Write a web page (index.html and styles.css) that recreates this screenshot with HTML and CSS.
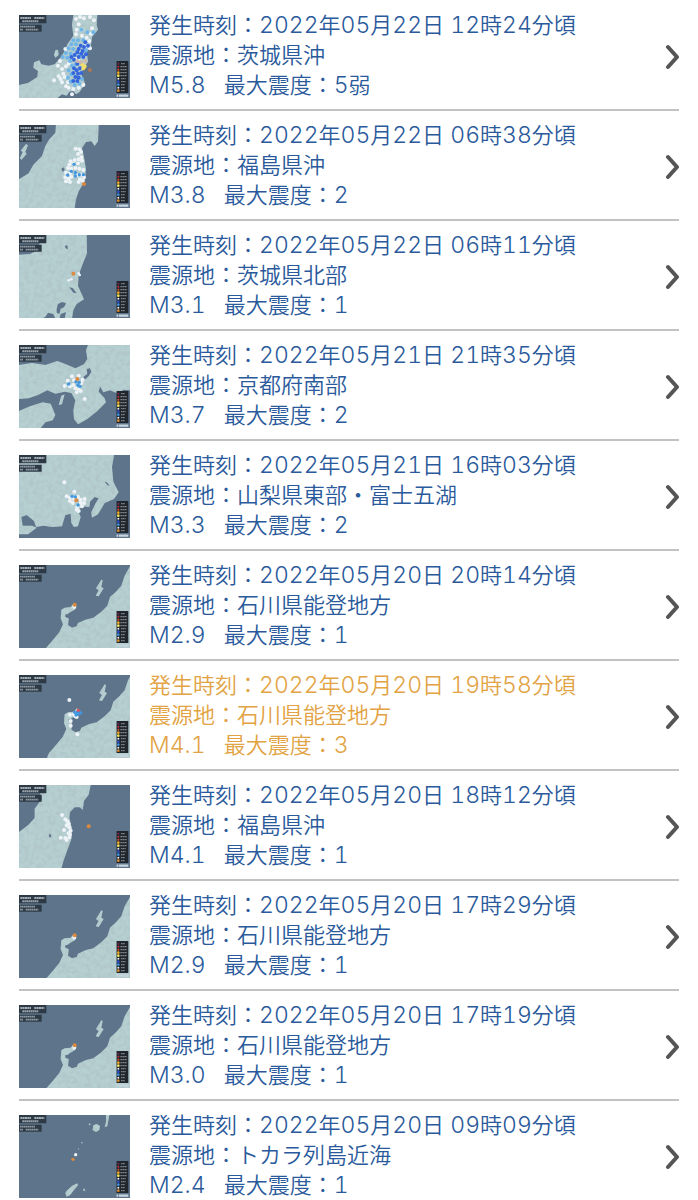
FILE: index.html
```
<!DOCTYPE html>
<html lang="ja">
<head>
  <meta charset="UTF-8" />
  <meta name="viewport" content="width=device-width, initial-scale=1.0" />
  <title>地震情報</title>
  <link rel="stylesheet" href="styles.css">
</head>
<body>
  <!-- shared map parts -->
  <svg class="defs" width="0" height="0" aria-hidden="true">
    <defs>
      <filter id="terrain" x="0" y="0" width="100%" height="100%">
        <feTurbulence type="fractalNoise" baseFrequency="0.07" numOctaves="3" seed="4" />
        <feColorMatrix values="0 0 0 0 0.42  0 0 0 0 0.53  0 0 0 0 0.55  0 1.8 0 0 -0.72" result="noise" />
        <feComposite in="noise" in2="SourceAlpha" operator="in" result="shade" />
        <feMerge>
          <feMergeNode in="SourceGraphic" />
          <feMergeNode in="shade" />
        </feMerge>
      </filter>
      <symbol id="caption" viewBox="0 0 84 52">
        <path d="M0 0H82V25H0ZM0 29H68V50H0Z" fill="#2d3a46" />
        <path d="M4 9H36M46 9H76" stroke="#a3adb5" stroke-width="6" stroke-dasharray="6 1" />
        <path d="M10 19H59" stroke="#98a3ac" stroke-width="6" stroke-dasharray="5 1" />
        <path d="M3 35H48M3 44H12M20 44H58" stroke="#8f9ba5" stroke-width="5" stroke-dasharray="5 1" />
      </symbol>
      <symbol id="legend" viewBox="0 0 40 110">
        <rect width="36" height="96" fill="#20262d" />
        <g stroke="#7d8286" stroke-width="4" stroke-dasharray="5 1">
          <path d="M14 8H26M12 17H32M12 26H32M12 35H32M12 44H32M14 53H28M14 62H28M14 71H26M14 80H26M14 89H26" />
        </g>
        <circle cx="6" cy="8" r="3" fill="#7d2457" />
        <circle cx="6" cy="17" r="3" fill="#c42e3b" />
        <circle cx="6" cy="26" r="3" fill="#e2502f" />
        <circle cx="6" cy="35" r="4" fill="#eaa52b" />
        <circle cx="6" cy="44" r="4" fill="#f3e45a" />
        <circle cx="6" cy="53" r="3" fill="#e6ecef" />
        <circle cx="6" cy="62" r="4" fill="#2c50c8" />
        <circle cx="6" cy="71" r="4" fill="#3e91dd" />
        <circle cx="6" cy="80" r="3" fill="#f2f5f7" />
        <circle cx="6" cy="89" r="4" fill="#d98a2c" />
        <path d="M0 104H36" stroke="#c7d5df" stroke-width="7" stroke-dasharray="6 2 28 1" />
      </symbol>
    </defs>
  </svg>

  <ul id="quakeList" class="quake-list"></ul>

  <script src="script.js"></script>
</body>
</html>
```
FILE: styles.css
```
body {
  margin: 0;
  background-color: #fff;
  color: #2a5a9b;
  font-family: "Noto Sans CJK JP", sans-serif;
  font-size: 22px;
  font-weight: 350;
  line-height: 30px;
}

.defs {
  position: absolute;
}

.quake-list {
  list-style: none;
  margin: 0;
  padding: 1px 19px 0;
}

.quake-list li {
  border-bottom: 2px solid #c2c2c2;
}

.quake-list li:last-child {
  border-bottom: none;
}

.quake {
  display: flex;
  align-items: center;
  gap: 19px;
  padding: 14px 0 11px;
  color: inherit;
  text-decoration: none;
}

li:last-child .quake {
  padding-bottom: 0;
}

.quake.alert {
  color: #e2a344;
}

.thumb {
  flex: none;
  width: 111px;
  height: 83px;
  background-color: #5e748a;
}

.land {
  fill: #b6cfd1;
}

.info {
  flex: 1;
  margin-top: -7px;
}

.info div {
  height: 30px;
  white-space: nowrap;
}

.num {
  font-family: Inter, sans-serif;
  font-size: 23px;
  font-weight: 300;
  font-variant-numeric: tabular-nums;
}

.intensity {
  margin-left: 18px;
}

.arrow {
  flex: none;
  width: 14px;
  height: 26px;
  fill: none;
  stroke: #555;
  stroke-width: 4;
  stroke-linecap: round;
  stroke-linejoin: round;
}
```
FILE: script.js
```
const SADO = "M274 68L278 70 274 90 281 94 266 118 257 116 266 100 258 94Z";

const NOTO = "M360 28V273H108L128 250 148 226 159 202 152 184 154 158 164 152 182 150 190 140 199 146 194 158 180 166 172 172 176 186 174 204 186 212 200 208 204 198 226 188 250 182 274 164 292 146 300 120 318 104 334 86 344 56Z" + SADO;

// coastlines, drawn three times larger than the thumbnail
const maps = {
  tohokuWide: "M190 30H262L260 60 264 74 246 96 242 126 230 140 234 170 220 188 214 208 226 238 216 250 208 262 198 268 190 258 178 260 170 272 156 268 142 279H27V240L54 234 82 216 84 198 70 188 72 172 88 166 94 178 116 182 134 178 150 160 166 136 172 118 190 92 186 60ZM136 136L144 134 146 150 136 158 132 150Z",
  fukushima: "M138 24H266L264 76 254 90 244 76 228 78 216 96 222 124 228 160 224 196 206 226 198 250 194 276H27V190L56 172 70 146 96 120 106 90 118 70 136 50ZM48 84L54 88 46 108 50 114 34 132 30 126 38 108 32 104Z",
  ibaraki: "M96 24H230L231 80 218 112 206 144 204 178 222 218 200 232 190 250 186 276H164L168 256 152 262 148 276H136L130 262 114 258 106 270 96 276H27V84L60 82 84 70Z",
  kansai: "M27 84L66 78 106 84 142 72 168 82 196 94 222 82 232 66 228 40 234 24H360V160L340 158 326 170 300 160 280 166 270 148 266 164 284 184 288 196 262 222 232 246 204 262 192 246 190 220 196 190 184 168 164 164 136 170 112 160 84 174 56 184 27 186ZM27 222L60 208 98 196 122 200 136 234 128 250 106 256 92 273H27ZM154 176L164 172 156 202 146 204Z",
  kanto: "M27 24H312L306 60 310 104 326 136 312 156 284 168 264 202 246 212 244 196 256 170 266 154 254 150 240 164 238 180 216 178 204 192 212 210 204 238 192 240 184 228 182 200 166 204 156 238 128 240 100 236 78 240 72 222 50 204 34 210 38 236 66 236 80 242 54 262 27 262Z",
  noto: NOTO,
  sanriku: "M80 21H242L236 50 222 68 218 96 210 88 194 88 180 102 178 120 186 152 184 184 172 216 160 250 154 272H27V162L54 142 74 120 74 92 96 62Z",
  tokara: "M288 349H298L292 382 284 386 288 370ZM250 380L260 376 270 382 268 394 258 400 248 394ZM170 576L186 562 202 554 204 560 192 574 180 590 170 594 166 584ZM238 374L242 376 240 380 236 378ZM214 430L218 430 216 436ZM220 570L224 570 226 576 220 576ZM204 448L207 450 204 453Z"
};

// small lakes and bays in sea colour
const water = {
  fukushima: "M154 158L162 154 164 162 158 168Z",
  ibaraki: "M164 58L172 56 174 66 168 66ZM178 182L188 184 200 200 190 198ZM140 246L144 232 156 226 168 230 162 242 152 246 148 262 140 258Z",
  kansai: "M230 96L240 94 244 104 236 118 224 128 220 120 232 110Z",
  kanto: "M284 104L290 106 300 116 292 114Z",
  noto: "M166 172L178 172 176 184 166 180Z",
  sanriku: "M116 170L122 168 124 178 118 178Z"
};

const W = "#eef3f8", B = "#4197df", D = "#3566dc", Y = "#f2de69", O = "#dd8a3e";

const notoDots = [[W, 6, "193 150"], [O, 6, "194 143"]];

const quakes = [
  { time: "2022年05月22日 12時24分頃", place: "茨城県沖", mag: "5.8", max: "5弱", map: "tohokuWide", top: 30, dots: [
    [W, 6, "198 42 210 36 222 40 240 36 252 46 206 58 200 74 198 88 216 92 230 98 242 86 246 70 238 108 240 130 226 124 214 74 166 132 150 168 144 182 156 192 160 206 168 184 176 176 146 214 132 226 152 222 164 216 156 232 174 232 176 248 190 252 206 248 220 240 168 244 186 268 198 162 206 168"],
    ["#6eb6e9", 6, "232 82 250 82 190 106 204 106 220 106 184 118 198 118 176 130 190 132 168 144 182 146 158 156 172 158 180 168 186 182 176 196 184 208 174 218 182 230 194 240 208 236 216 222 214 74 228 136 210 150 198 178"],
    [D, 6, "226 112 234 122 212 122 222 126 206 132 218 138 202 142 214 146 194 150 206 156 184 156 220 156 192 164 228 148 202 176 210 190 200 196 192 190 190 204 204 206 214 204 196 216 206 218 202 228 190 228"],
    [Y, 6, "216 178 224 184 220 190"], ["#ccb9a9", 6, "202 168 212 172 226 168"], ["#ad7655", 6, "240 195"]
  ] },
  { time: "2022年05月22日 06時38分頃", place: "福島県沖", mag: "3.8", max: "2", map: "fukushima", top: 27, dots: [
    [W, 6, "197 98 208 100 213 108 204 114 214 124 182 136 194 132 206 130 216 134 178 146 190 144 204 142 174 156 184 158 196 156 208 158 220 162 168 170 180 172 166 184 176 188 184 182 168 196 180 198 200 178 214 176 222 184 210 190 218 194 206 198"],
    [B, 5, "192 145 184 166 173 177 196 170 196 180 208 176 220 176"], [O, 6, "222 204"]
  ] },
  { time: "2022年05月22日 06時11分頃", place: "茨城県北部", mag: "3.1", max: "1", map: "ibaraki", top: 25, dots: [
    [W, 4, "176 161 184 158 209 145 206 140"], [O, 6, "190 141"]
  ] },
  { time: "2022年05月21日 21時35分頃", place: "京都府南部", mag: "3.7", max: "2", map: "kansai", top: 24, dots: [
    [W, 6, "173 131 186 118 192 130 206 116 218 128 164 147 180 148 190 144 196 154 206 158 200 166 212 162 214 138 224 186"],
    [B, 5, "176 141 198 134 208 136 210 148 204 144"], [O, 6, "202 126"]
  ] },
  { time: "2022年05月21日 16時03分頃", place: "山梨県東部・富士五湖", mag: "3.3", max: "2", map: "kanto", top: 24, dots: [
    [W, 6, "163 106 193 134 170 148 180 152 192 156 204 150 212 158 224 156 180 162 188 168 212 168 222 168 216 178 202 180 206 192 200 188"],
    [B, 5, "186 148 196 150 204 174"], [O, 6, "199 160"]
  ] },
  { time: "2022年05月20日 20時14分頃", place: "石川県能登地方", mag: "2.9", max: "1", map: "noto", top: 24, dots: notoDots },
  { time: "2022年05月20日 19時58分頃", place: "石川県能登地方", mag: "4.1", max: "3", map: "noto", top: 40, left: 17, alert: true, dots: [
    [W, 6, "168 115 170 159 182 158 190 166 172 178 172 192 192 218 186 164"],
    [B, 5, "184 152 192 152 198 150 202 154 188 160 194 158"], ["#d75365", 5, "195 146"]
  ] },
  { time: "2022年05月20日 18時12分頃", place: "福島県沖", mag: "4.1", max: "1", map: "sanriku", top: 21, dots: [
    [W, 6, "156 111 166 124 172 130 176 138 170 142 178 148 162 156 182 158 176 166 152 179 166 180 178 178 170 186 180 170"], [O, 6, "236 145"]
  ] },
  { time: "2022年05月20日 17時29分頃", place: "石川県能登地方", mag: "2.9", max: "1", map: "noto", top: 22, dots: notoDots },
  { time: "2022年05月20日 17時19分頃", place: "石川県能登地方", mag: "3.0", max: "1", map: "noto", top: 22, dots: notoDots },
  { time: "2022年05月20日 09時09分頃", place: "トカラ列島近海", mag: "2.4", max: "1", map: "tokara", top: 349, dots: [
    [W, 5, "197 468"], [O, 5, "189 482"]
  ] }
];

// latin letters and digits use their own font
function num(text) {
  return text.replace(/[0-9M. ]+/g, '<span class="num">$&</span>');
}

function drawDots([color, r, points]) {
  const p = points.split(" ");
  let out = "";
  for (let i = 0; i < p.length; i += 2) {
    out += `<circle cx="${p[i]}" cy="${p[i + 1]}" r="${r}" fill="${color}" />`;
  }
  return out;
}

function drawMap(q) {
  const x = q.left || 27;
  return `<svg class="thumb" viewBox="${x} ${q.top} 333 249" role="img" aria-label="${q.place}の震度分布">
    <path class="land" d="${maps[q.map]}${q.left ? "M108 272H360V300H96Z" : ""}" filter="url(#terrain)" />
    <path d="${water[q.map] || ""}" fill="#5e748a" />
    ${q.dots.map(drawDots).join("")}
    <use href="#caption" x="${x}" y="${q.top}" width="84" height="52" />
    <use href="#legend" x="${x + 292}" y="${q.top + 138}" width="40" height="110" />
  </svg>`;
}

document.getElementById("quakeList").innerHTML = quakes.map(q => `
  <li>
    <a href="#" class="quake${q.alert ? " alert" : ""}">
      ${drawMap(q)}
      <div class="info">
        <div>発生時刻：${num(q.time)}</div>
        <div>震源地：${q.place}</div>
        <div>${num("M" + q.mag)}<span class="intensity">最大震度：${num(q.max)}</span></div>
      </div>
      <svg class="arrow" viewBox="0 0 14 26" aria-hidden="true"><path d="M3 3L12 13 3 23" /></svg>
    </a>
  </li>`).join("");
```
